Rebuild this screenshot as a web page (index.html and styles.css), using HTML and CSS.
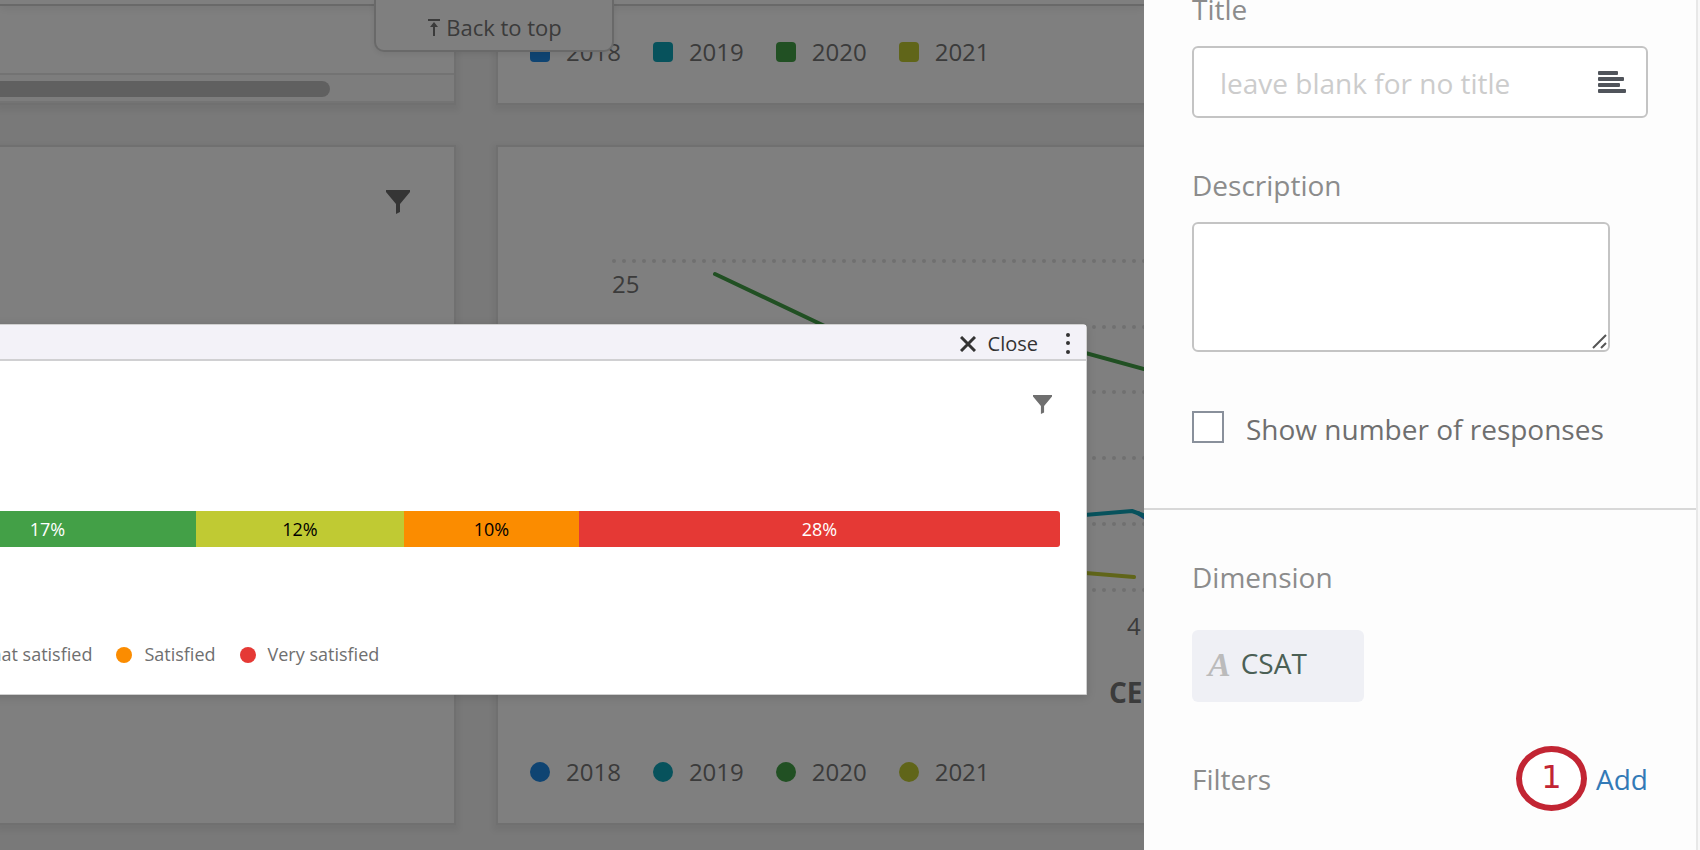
FILE: index.html
```html
<!DOCTYPE html>
<html lang="en">

<head>
  <meta charset="UTF-8">
  <meta name="viewport" content="width=device-width, initial-scale=1.0">
  <title>Dashboard - Edit Widget</title>
  <link rel="stylesheet" href="styles.css">
</head>

<body>
  <main class="dashboard">
    <div class="cards">
      <section class="card card-table">
        <div class="scroll-track">
          <div class="scroll-thumb"></div>
        </div>
      </section>

      <section class="card card-wide">
        <ul class="legend">
          <li><span class="swatch blue"></span>2018</li>
          <li><span class="swatch teal"></span>2019</li>
          <li><span class="swatch green"></span>2020</li>
          <li><span class="swatch lime"></span>2021</li>
        </ul>
      </section>

      <section class="card card-filter">
        <button type="button" class="icon-button" aria-label="Filter">
          <svg width="24" height="24" viewBox="0 0 24 24"><path d="M0 0h24v2l-10 12v8l-4 2V14L0 2z" fill="#6b6b6b"/></svg>
        </button>
      </section>

      <section class="card card-wide">
        <svg class="chart" width="646" height="580" viewBox="0 0 646 580">
          <g class="grid-lines">
            <path d="M116 114H656"/>
            <path d="M116 180H656"/>
            <path d="M116 245H656"/>
            <path d="M116 311H656"/>
            <path d="M116 377H656"/>
            <path d="M116 443H656"/>
          </g>
          <text class="axis-text" x="114" y="146">25</text>
          <g class="series">
            <path d="M217 127L354 192L500 182L646 222" stroke="#43a047"/>
            <path d="M640 366L656 377" stroke="#1e88e5"/>
            <path d="M480 377L634 364L656 372" stroke="#0fa5b9"/>
            <path d="M480 417L636 430" stroke="#c0ca33"/>
          </g>
          <text class="axis-text" x="629" y="488">4</text>
          <text class="axis-title" x="611" y="556">CE</text>
        </svg>
        <ul class="legend">
          <li><span class="swatch round blue"></span>2018</li>
          <li><span class="swatch round teal"></span>2019</li>
          <li><span class="swatch round green"></span>2020</li>
          <li><span class="swatch round lime"></span>2021</li>
        </ul>
      </section>
    </div>

    <header class="top-strip">
      <button type="button" class="back-to-top">
        <svg width="12" height="17" viewBox="0 0 12 17"><path d="M0 0h12v2H0zM6 3l4 5H7v9H5V8H2z" fill="#767676"/></svg>
        Back to top
      </button>
    </header>

    <div class="backdrop"></div>

    <!-- Widget being edited -->
    <section class="widget">
      <div class="widget-header">
        <button type="button" class="close-button">
          <svg width="16" height="16" viewBox="0 0 16 16"><path d="M1 1l14 14M15 1L1 15" stroke="#333" stroke-width="3"/></svg>
          Close
        </button>
        <button type="button" class="icon-button" aria-label="More options">
          <svg width="4" height="22" viewBox="0 0 4 22"><g fill="#333"><circle cx="2" cy="3" r="2"/><circle cx="2" cy="11" r="2"/><circle cx="2" cy="20" r="2"/></g></svg>
        </button>
      </div>
      <div class="widget-tools">
        <button type="button" class="icon-button" aria-label="Filter">
          <svg width="19" height="19" viewBox="0 0 24 24"><path d="M0 0h24v2l-10 12v8l-4 2V14L0 2z" fill="#6f6f6f"/></svg>
        </button>
      </div>
      <div class="bar">
        <div class="bar-part green" style="flex-grow: 297">17%</div>
        <div class="bar-part lime dark-text" style="flex-grow: 208">12%</div>
        <div class="bar-part orange dark-text" style="flex-grow: 175">10%</div>
        <div class="bar-part red" style="flex-grow: 481">28%</div>
      </div>
      <ul class="widget-legend">
        <li><span class="dot lime"></span>Somewhat satisfied</li>
        <li><span class="dot orange"></span>Satisfied</li>
        <li><span class="dot red"></span>Very satisfied</li>
      </ul>
    </section>
  </main>

  <aside class="panel">
    <form class="panel-section">
      <div class="form-group">
        <label for="title">Title</label>
        <div class="title-box">
          <input type="text" id="title" name="title" placeholder="leave blank for no title">
          <svg width="28" height="22" viewBox="0 0 28 22"><g fill="#50545b"><rect width="20" height="4" rx="1"/><rect y="6" width="26" height="4" rx="1"/><rect y="12" width="22" height="4" rx="1"/><rect y="18" width="28" height="4" rx="1"/></g></svg>
        </div>
      </div>

      <div class="form-group">
        <label for="description">Description</label>
        <div class="description-box">
          <textarea id="description" name="description"></textarea>
          <svg class="resize-grip" width="15" height="15" viewBox="0 0 15 15"><path d="M1 14L14 1M9 14l5-5" stroke="#555" stroke-width="2"/></svg>
        </div>
      </div>

      <div class="check-row">
        <input type="checkbox" id="showResponses" name="showResponses">
        <label for="showResponses">Show number of responses</label>
      </div>
    </form>

    <div class="panel-section panel-data">
      <h2>Dimension</h2>
      <button type="button" class="chip"><span class="chip-type">A</span>CSAT</button>
      <div class="filter-row">
        <h2>Filters</h2>
        <span class="step">1</span>
        <a href="#">Add</a>
      </div>
    </div>
  </aside>
</body>

</html>
```

FILE: styles.css
```css
:root {
  --blue: #1e88e5;
  --teal: #0fa5b9;
  --green: #43a047;
  --lime: #c0ca33;
  --orange: #fb8c00;
  --red: #e53935;
  --label-color: #8c8c8c;
  --border-color: #c4c4c4;
}

* {
  margin: 0;
  padding: 0;
  box-sizing: border-box;
}

body {
  font-family: "Open Sans", "Noto Sans", sans-serif;
  display: flex;
  height: 100vh;
  overflow: hidden;
  background: #f8f8f8;
}

button {
  font: inherit;
  border: none;
  background: none;
  cursor: pointer;
}

ul {
  list-style: none;
}

svg {
  display: block;
  flex: none;
}

.blue { background: var(--blue); }
.teal { background: var(--teal); }
.green { background: var(--green); }
.lime { background: var(--lime); }
.orange { background: var(--orange); }
.red { background: var(--red); }

/* Dashboard */
.dashboard {
  position: relative;
  flex: 1;
  min-width: 0;
  overflow: hidden;
  background: #f2f2f2;
}

.cards {
  display: grid;
  grid-template-columns: 456px 1fr;
  grid-template-rows: 105px 680px;
  gap: 40px;
}

.card {
  display: flex;
  flex-direction: column;
  justify-content: flex-end;
  background: #fff;
  border: 2px solid #e0e0e0;
  border-left: none;
  box-shadow: 0 3px 6px 3px rgba(0, 0, 0, 0.05);
}

.card-wide {
  border-left: 2px solid #e0e0e0;
  border-right: none;
  padding-bottom: 35px;
}

.card-filter {
  align-items: flex-end;
  justify-content: flex-start;
  padding: 43px 44px;
}

.scroll-track {
  height: 30px;
  padding: 6px 0;
  background: #fafafa;
  border-top: 2px solid #e6e6e6;
  border-bottom: 2px solid #e8e8e8;
}

.scroll-thumb {
  width: 330px;
  height: 16px;
  background: #c1c1c1;
  border-radius: 0 8px 8px 0;
}

.legend {
  display: flex;
  gap: 32px;
  padding-left: 32px;
  font-size: 24px;
  line-height: 33px;
  color: #767676;
}

.legend li {
  display: flex;
  align-items: center;
  gap: 16px;
}

.swatch {
  width: 20px;
  height: 20px;
  border-radius: 4px;
}

.swatch.round {
  border-radius: 50%;
}

.chart {
  margin-bottom: 28px;
}

.grid-lines path {
  stroke: #e0e0e0;
  stroke-width: 4;
  stroke-linecap: round;
  stroke-dasharray: 0 10;
}

.series path {
  fill: none;
  stroke-width: 4;
  stroke-linecap: round;
  stroke-linejoin: round;
}

.axis-text {
  font-size: 24px;
  fill: #767676;
}

.axis-title {
  font-size: 28px;
  font-weight: 700;
  fill: #767676;
}

.top-strip {
  position: absolute;
  top: 0;
  left: 0;
  right: 0;
  height: 6px;
  padding-left: 374px;
  background: #fff;
  border-bottom: 2px solid #d2d2d2;
  box-shadow: 0 2px 10px rgba(0, 0, 0, 0.1);
}

.back-to-top {
  display: flex;
  align-items: center;
  justify-content: center;
  gap: 6px;
  width: 240px;
  height: 52px;
  padding: 4px 0 0 2px;
  font-size: 22px;
  line-height: 30px;
  color: #767676;
  background: #fff;
  border: 2px solid #d2d2d2;
  border-top: none;
  border-radius: 0 0 10px 10px;
  box-shadow: 0 2px 6px rgba(0, 0, 0, 0.08);
}

.backdrop {
  position: absolute;
  inset: 0;
  background: rgba(0, 0, 0, 0.5);
}

/* Widget on top of the backdrop */
.widget {
  position: absolute;
  top: 324px;
  left: -126px;
  right: 57px;
  background: #fff;
  border: 1px solid #d0d0d0;
  border-radius: 4px 4px 0 0;
  box-shadow: 0 2px 10px rgba(0, 0, 0, 0.15);
}

.widget-header {
  display: flex;
  align-items: center;
  justify-content: flex-end;
  gap: 28px;
  height: 36px;
  padding: 2px 16px 0 0;
  background: #f3f2f8;
  border-bottom: 2px solid #d0d0d2;
}

.close-button {
  display: flex;
  align-items: center;
  gap: 12px;
  padding-top: 2px;
  font-size: 20px;
  line-height: 28px;
  color: #333;
}

.widget-tools {
  display: flex;
  justify-content: flex-end;
  padding: 34px 34px 97px;
}

.bar {
  display: flex;
  height: 36px;
  margin: 0 26px 0 24px;
  border-radius: 0 3px 3px 0;
  overflow: hidden;
}

.bar-part {
  flex: 1 1 0;
  font-size: 18px;
  line-height: 36px;
  text-align: center;
  color: #fff;
}

.dark-text {
  color: #000;
}

.widget-legend {
  display: flex;
  gap: 24px;
  padding: 95px 26px 27px;
  font-size: 18px;
  line-height: 25px;
  color: #6f6f6f;
}

.widget-legend li {
  display: flex;
  align-items: center;
  gap: 12px;
}

.dot {
  width: 16px;
  height: 16px;
  border-radius: 50%;
}

/* Settings panel */
.panel {
  flex: none;
  width: 554px;
  margin-right: 2px;
  background: #fdfdfd;
  border-right: 2px solid #e8e8e8;
  font-size: 28px;
  line-height: 38px;
  color: var(--label-color);
}

.panel-section {
  padding: 0 48px 60px;
  border-bottom: 2px solid #d8d8d8;
}

/* the panel is scrolled a little past its first label */
.panel-section:first-child {
  margin-top: -10px;
}

.panel-data {
  padding-top: 48px;
  border-bottom: none;
}

.form-group {
  margin-bottom: 48px;
}

.form-group label {
  display: block;
  margin-bottom: 18px;
}

.title-box {
  display: flex;
  align-items: center;
  height: 72px;
  padding: 0 20px 0 26px;
  background: #fff;
  border: 2px solid var(--border-color);
  border-radius: 6px;
}

.title-box input {
  flex: 1;
  min-width: 0;
  padding-top: 2px;
  font: inherit;
  color: #555;
  background: none;
  border: none;
  outline: none;
}

.title-box input::placeholder {
  color: #ccc;
}

.description-box {
  position: relative;
  margin-right: 38px;
}

.description-box textarea {
  display: block;
  width: 100%;
  height: 130px;
  padding: 12px 26px;
  font: inherit;
  background: #fff;
  border: 2px solid var(--border-color);
  border-radius: 6px;
  resize: none;
}

.resize-grip {
  position: absolute;
  right: 3px;
  bottom: 3px;
}

.check-row {
  display: flex;
  gap: 22px;
  padding-top: 10px;
  color: #6f6f6f;
}

.check-row input {
  appearance: none;
  width: 32px;
  height: 32px;
  margin-top: 1px;
  background: #fff;
  border: 2px solid #89909b;
}

.panel h2 {
  font-size: 28px;
  font-weight: 400;
}

.chip {
  display: flex;
  align-items: center;
  gap: 10px;
  width: 172px;
  height: 72px;
  margin-top: 34px;
  padding: 0 16px 6px;
  color: #4b6055;
  background: #eff0f5;
  border-radius: 6px;
}

.chip-type {
  padding-top: 4px;
  font-family: "Liberation Serif", serif;
  font-size: 34px;
  font-style: italic;
  font-weight: 700;
  color: #bbb;
}

.filter-row {
  display: flex;
  align-items: center;
  gap: 9px;
  margin-top: 44px;
}

.filter-row h2 {
  flex: 1;
}

.filter-row a {
  color: #337ab7;
  text-decoration: none;
}

.step {
  width: 71px;
  height: 65px;
  font-family: "DejaVu Sans", sans-serif;
  font-size: 32px;
  line-height: 50px;
  text-align: center;
  color: #c22533;
  background: #fff;
  border: 6px solid #c22533;
  border-radius: 50%;
}
```
